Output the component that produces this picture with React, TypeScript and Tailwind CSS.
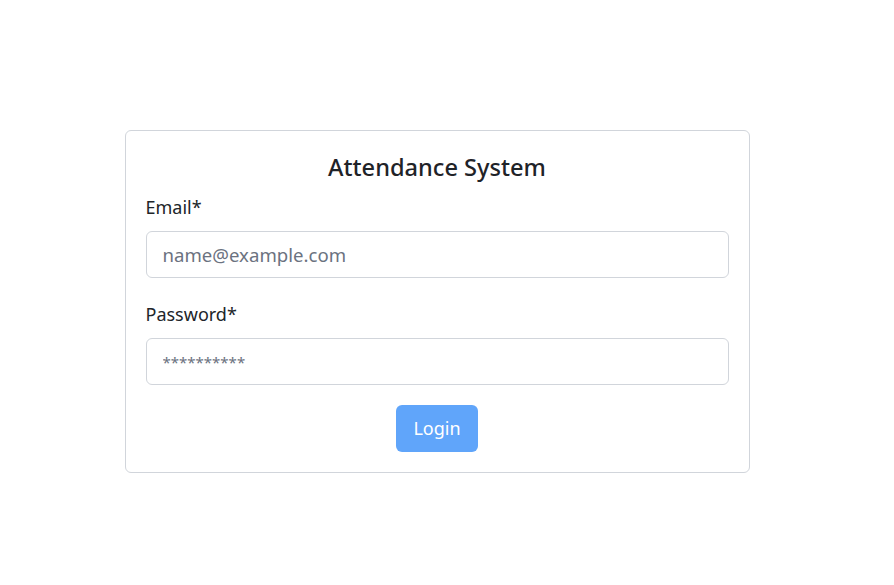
import React from "react";

export default function App() {
  return (
    <div
      className="min-h-[585px] w-full bg-white flex justify-center pr-5 pt-[130px]"
      style={{ fontFamily: '"Noto Sans", "Open Sans", sans-serif' }}
    >
      <div className="w-[625px] h-[343px] border border-[#d1d5db] rounded-[6px] px-5 pt-5 pb-5 flex flex-col">
        <h1 className="text-[23.6px] leading-[32px] font-medium text-center text-[#1f2328]">
          Attendance System
        </h1>
        <label className="mt-[10px] text-[18px] leading-[28px] text-[#212529]">Email*</label>
        <input
          type="email"
          placeholder="name@example.com"
          className="mt-[10px] h-[47px] w-full rounded-[6px] border border-[#d1d5db] px-4 text-[18.6px] text-[#212529] placeholder:text-[#6b7280] outline-none"
        />
        <label className="mt-[22px] text-[18px] leading-[28px] text-[#212529]">Password*</label>
        <input
          type="password"
          placeholder="**********"
          className="mt-[10px] h-[47px] w-full rounded-[6px] border border-[#d1d5db] px-4 text-[15px] text-[#212529] placeholder:text-[#6b7280] outline-none"
        />
        <div className="mt-[20px] flex justify-center">
          <button className="h-[47px] w-[82px] rounded-[6px] bg-[#60a5fa] text-white text-[18px]">
            Login
          </button>
        </div>
      </div>
    </div>
  );
}
